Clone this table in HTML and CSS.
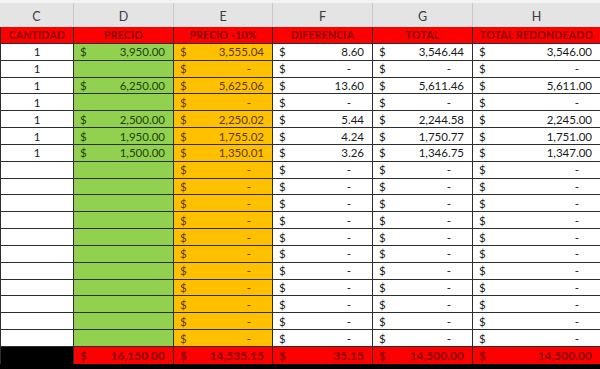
FILE: index.html
```html
<!DOCTYPE html>
<html>
<head>
<meta charset="utf-8">
<link rel="stylesheet" href="styles.css">
</head>
<body>
<div class="colhead">
  <div class="letters">
    <div>C</div><div>D</div><div>E</div><div>F</div><div>G</div><div>H</div>
  </div>
</div>
<div class="sheet">
  <div class="th">CANTIDAD</div><div class="th">PRECIO</div><div class="th">PRECIO -10%</div><div class="th">DIFERENCIA</div><div class="th">TOTAL</div><div class="th">TOTAL REDONDEADO</div>

  <div class="c">1</div><div class="cell g"><span>$</span><span>3,950.00</span></div><div class="cell o"><span>$</span><span>3,555.04</span></div><div class="cell w"><span>$</span><span>8.60</span></div><div class="cell w"><span>$</span><span>3,546.44</span></div><div class="cell w"><span>$</span><span>3,546.00</span></div>

  <div class="c">1</div><div class="cell g"></div><div class="cell o dash"><span>$</span><span>-</span></div><div class="cell w dash"><span>$</span><span>-</span></div><div class="cell w dash"><span>$</span><span>-</span></div><div class="cell w dash"><span>$</span><span>-</span></div>

  <div class="c">1</div><div class="cell g"><span>$</span><span>6,250.00</span></div><div class="cell o"><span>$</span><span>5,625.06</span></div><div class="cell w"><span>$</span><span>13.60</span></div><div class="cell w"><span>$</span><span>5,611.46</span></div><div class="cell w"><span>$</span><span>5,611.00</span></div>

  <div class="c">1</div><div class="cell g"></div><div class="cell o dash"><span>$</span><span>-</span></div><div class="cell w dash"><span>$</span><span>-</span></div><div class="cell w dash"><span>$</span><span>-</span></div><div class="cell w dash"><span>$</span><span>-</span></div>

  <div class="c">1</div><div class="cell g"><span>$</span><span>2,500.00</span></div><div class="cell o"><span>$</span><span>2,250.02</span></div><div class="cell w"><span>$</span><span>5.44</span></div><div class="cell w"><span>$</span><span>2,244.58</span></div><div class="cell w"><span>$</span><span>2,245.00</span></div>

  <div class="c">1</div><div class="cell g"><span>$</span><span>1,950.00</span></div><div class="cell o"><span>$</span><span>1,755.02</span></div><div class="cell w"><span>$</span><span>4.24</span></div><div class="cell w"><span>$</span><span>1,750.77</span></div><div class="cell w"><span>$</span><span>1,751.00</span></div>

  <div class="c">1</div><div class="cell g"><span>$</span><span>1,500.00</span></div><div class="cell o"><span>$</span><span>1,350.01</span></div><div class="cell w"><span>$</span><span>3.26</span></div><div class="cell w"><span>$</span><span>1,346.75</span></div><div class="cell w"><span>$</span><span>1,347.00</span></div>

  <div class="c"></div><div class="cell g"></div><div class="cell o dash"><span>$</span><span>-</span></div><div class="cell w dash"><span>$</span><span>-</span></div><div class="cell w dash"><span>$</span><span>-</span></div><div class="cell w dash"><span>$</span><span>-</span></div>
  <div class="c"></div><div class="cell g"></div><div class="cell o dash"><span>$</span><span>-</span></div><div class="cell w dash"><span>$</span><span>-</span></div><div class="cell w dash"><span>$</span><span>-</span></div><div class="cell w dash"><span>$</span><span>-</span></div>
  <div class="c"></div><div class="cell g"></div><div class="cell o dash"><span>$</span><span>-</span></div><div class="cell w dash"><span>$</span><span>-</span></div><div class="cell w dash"><span>$</span><span>-</span></div><div class="cell w dash"><span>$</span><span>-</span></div>
  <div class="c"></div><div class="cell g"></div><div class="cell o dash"><span>$</span><span>-</span></div><div class="cell w dash"><span>$</span><span>-</span></div><div class="cell w dash"><span>$</span><span>-</span></div><div class="cell w dash"><span>$</span><span>-</span></div>
  <div class="c"></div><div class="cell g"></div><div class="cell o dash"><span>$</span><span>-</span></div><div class="cell w dash"><span>$</span><span>-</span></div><div class="cell w dash"><span>$</span><span>-</span></div><div class="cell w dash"><span>$</span><span>-</span></div>
  <div class="c"></div><div class="cell g"></div><div class="cell o dash"><span>$</span><span>-</span></div><div class="cell w dash"><span>$</span><span>-</span></div><div class="cell w dash"><span>$</span><span>-</span></div><div class="cell w dash"><span>$</span><span>-</span></div>
  <div class="c"></div><div class="cell g"></div><div class="cell o dash"><span>$</span><span>-</span></div><div class="cell w dash"><span>$</span><span>-</span></div><div class="cell w dash"><span>$</span><span>-</span></div><div class="cell w dash"><span>$</span><span>-</span></div>
  <div class="c"></div><div class="cell g"></div><div class="cell o dash"><span>$</span><span>-</span></div><div class="cell w dash"><span>$</span><span>-</span></div><div class="cell w dash"><span>$</span><span>-</span></div><div class="cell w dash"><span>$</span><span>-</span></div>
  <div class="c"></div><div class="cell g"></div><div class="cell o dash"><span>$</span><span>-</span></div><div class="cell w dash"><span>$</span><span>-</span></div><div class="cell w dash"><span>$</span><span>-</span></div><div class="cell w dash"><span>$</span><span>-</span></div>
  <div class="c"></div><div class="cell g"></div><div class="cell o dash"><span>$</span><span>-</span></div><div class="cell w dash"><span>$</span><span>-</span></div><div class="cell w dash"><span>$</span><span>-</span></div><div class="cell w dash"><span>$</span><span>-</span></div>
  <div class="c"></div><div class="cell g"></div><div class="cell o dash"><span>$</span><span>-</span></div><div class="cell w dash"><span>$</span><span>-</span></div><div class="cell w dash"><span>$</span><span>-</span></div><div class="cell w dash"><span>$</span><span>-</span></div>

  <div class="blk"></div><div class="cell tot"><span>$</span><span>16,150.00</span></div><div class="cell tot"><span>$</span><span>14,535.15</span></div><div class="cell tot"><span>$</span><span>35.15</span></div><div class="cell tot"><span>$</span><span>14,500.00</span></div><div class="cell tot"><span>$</span><span>14,500.00</span></div>
</div>
</body>
</html>
```
FILE: styles.css
```css
html, body {
  margin: 0;
  padding: 0;
  background: #000;
}
body {
  width: 600px;
  height: 369px;
  overflow: hidden;
  font-family: Lato, "Open Sans", sans-serif;
}
.colhead {
  background: #f3f3f3;
  padding-top: 3px;
}
.letters {
  display: grid;
  grid-template-columns: 73px 99px 98px 99px 99px 127px;
  column-gap: 1px;
  background: #c9c9c9;
  height: 24px;
}
.letters div {
  background: #e4e4e4;
  color: #3c3c3c;
  font-size: 12.5px;
  display: flex;
  align-items: center;
  justify-content: center;
  padding-top: 2px;
}
.sheet {
  display: grid;
  grid-template-columns: 72px 99px 98px 99px 99px 127px;
  grid-template-rows: 16px repeat(18, 1fr) 17px;
  gap: 1px;
  height: 337px;
  padding-left: 1px;
  background: #2e2e2e;
  font-size: 11.5px;
}
.th {
  background: #ff0000;
  color: #880000;
  font-weight: 700;
  font-size: 10.5px;
  letter-spacing: 0.2px;
  display: flex;
  align-items: center;
  justify-content: center;
  white-space: nowrap;
}
.c {
  background: #fff;
  color: #1a1a1a;
  display: flex;
  align-items: center;
  justify-content: center;
}
.cell {
  display: flex;
  align-items: center;
  justify-content: space-between;
  padding: 0 8px 0 6px;
  color: #1a1a1a;
}
.cell.dash {
  padding-right: 21px;
}
.g {
  background: #92d050;
  color: #21430e;
}
.o {
  background: #ffc000;
  color: #5a3b00;
}
.w {
  background: #fff;
}
.tot {
  background: #ff0000;
  color: #880000;
  font-weight: 700;
  font-size: 12px;
}
.blk {
  background: #000;
}
```
